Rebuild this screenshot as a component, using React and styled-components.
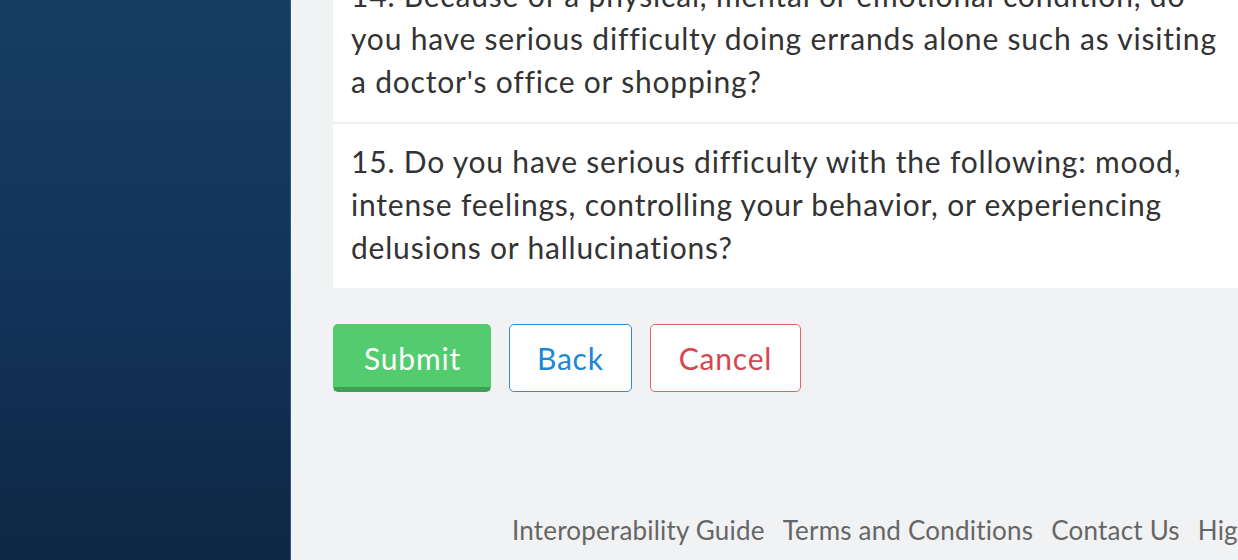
import React from 'react';
import styled, { createGlobalStyle } from 'styled-components';

const GlobalStyle = createGlobalStyle`
  html, body {
    margin: 0;
    padding: 0;
    height: 100%;
    overflow: hidden;
  }
  body {
    font-family: 'Lato', 'Noto Sans', sans-serif;
    background: #f1f2f4;
  }
`;

const questions = [
  {
    id: 14,
    lines: [
      '14. Because of a physical, mental or emotional condition, do',
      'you have serious difficulty doing errands alone such as visiting',
      "a doctor's office or shopping?",
    ],
  },
  {
    id: 15,
    lines: [
      '15. Do you have serious difficulty with the following: mood,',
      'intense feelings, controlling your behavior, or experiencing',
      'delusions or hallucinations?',
    ],
  },
];

const footerLinks = ['Interoperability Guide', 'Terms and Conditions', 'Contact Us', 'Highlights'];

function App() {
  return (
    <>
      <GlobalStyle />
      <Layout>
        <Sidebar />
        <Main>
          <Card>
            {questions.map((q) => (
              <QuestionRow key={q.id}>
                {q.lines.map((line) => (
                  <Line key={line}>{line}</Line>
                ))}
              </QuestionRow>
            ))}
          </Card>
          <Actions>
            <Button variant="submit">Submit</Button>
            <Button variant="back">Back</Button>
            <Button variant="cancel">Cancel</Button>
          </Actions>
          <Footer>
            {footerLinks.map((link) => (
              <FooterLink key={link}>{link}</FooterLink>
            ))}
          </Footer>
        </Main>
      </Layout>
    </>
  );
}

export default App;

const Layout = styled.div`
  display: flex;
  width: 1238px;
  height: 560px;
  overflow: hidden;
`;

const Sidebar = styled.aside`
  flex: 0 0 290px;
  height: 100%;
  background: linear-gradient(180deg, #173d63 0%, #12345a 50%, #0e2744 100%);
  border-right: 1px solid #2f5680;
`;

const Main = styled.main`
  flex: 1;
  min-width: 0;
  display: flex;
  flex-direction: column;
  padding-left: 42px;
  overflow: hidden;
`;

const Card = styled.div`
  margin-top: -42px;
  width: 1000px;
  background: #fff;
`;

const QuestionRow = styled.div`
  padding: 16px 18px 19px;
  & + & {
    border-top: 2px solid #eeeff1;
  }
`;

const Line = styled.div`
  font-size: 30px;
  line-height: 43px;
  color: #333;
  white-space: nowrap;
  letter-spacing: 0.8px;
`;

const Actions = styled.div`
  display: flex;
  gap: 18px;
  margin-top: 36px;
`;

const variants = {
  submit: `
    background: #52cc6e;
    color: #fff;
    border: 1px solid #52cc6e;
    border-bottom: 5px solid #3f9d55;
    padding: 3px 29px 0 30px;
  `,
  back: `
    background: #fff;
    color: #1a87d8;
    border: 1px solid #2a8fd9;
    padding: 0 27px;
  `,
  cancel: `
    background: #fff;
    color: #d9454e;
    border: 1px solid #e0646b;
    padding: 0 28px;
  `,
};

const Button = styled.button`
  box-sizing: border-box;
  height: 68px;
  font-family: 'Lato', 'Noto Sans', sans-serif;
  font-size: 30px;
  letter-spacing: 0.8px;
  border-radius: 5px;
  cursor: pointer;
  ${(p) => variants[p.variant]}
`;

const Footer = styled.nav`
  display: flex;
  gap: 18px;
  margin-top: auto;
  padding: 0 0 12px 179px;
  white-space: nowrap;
`;

const FooterLink = styled.a`
  font-size: 26px;
  line-height: 36px;
  color: #666;
  letter-spacing: 0.2px;
`;
